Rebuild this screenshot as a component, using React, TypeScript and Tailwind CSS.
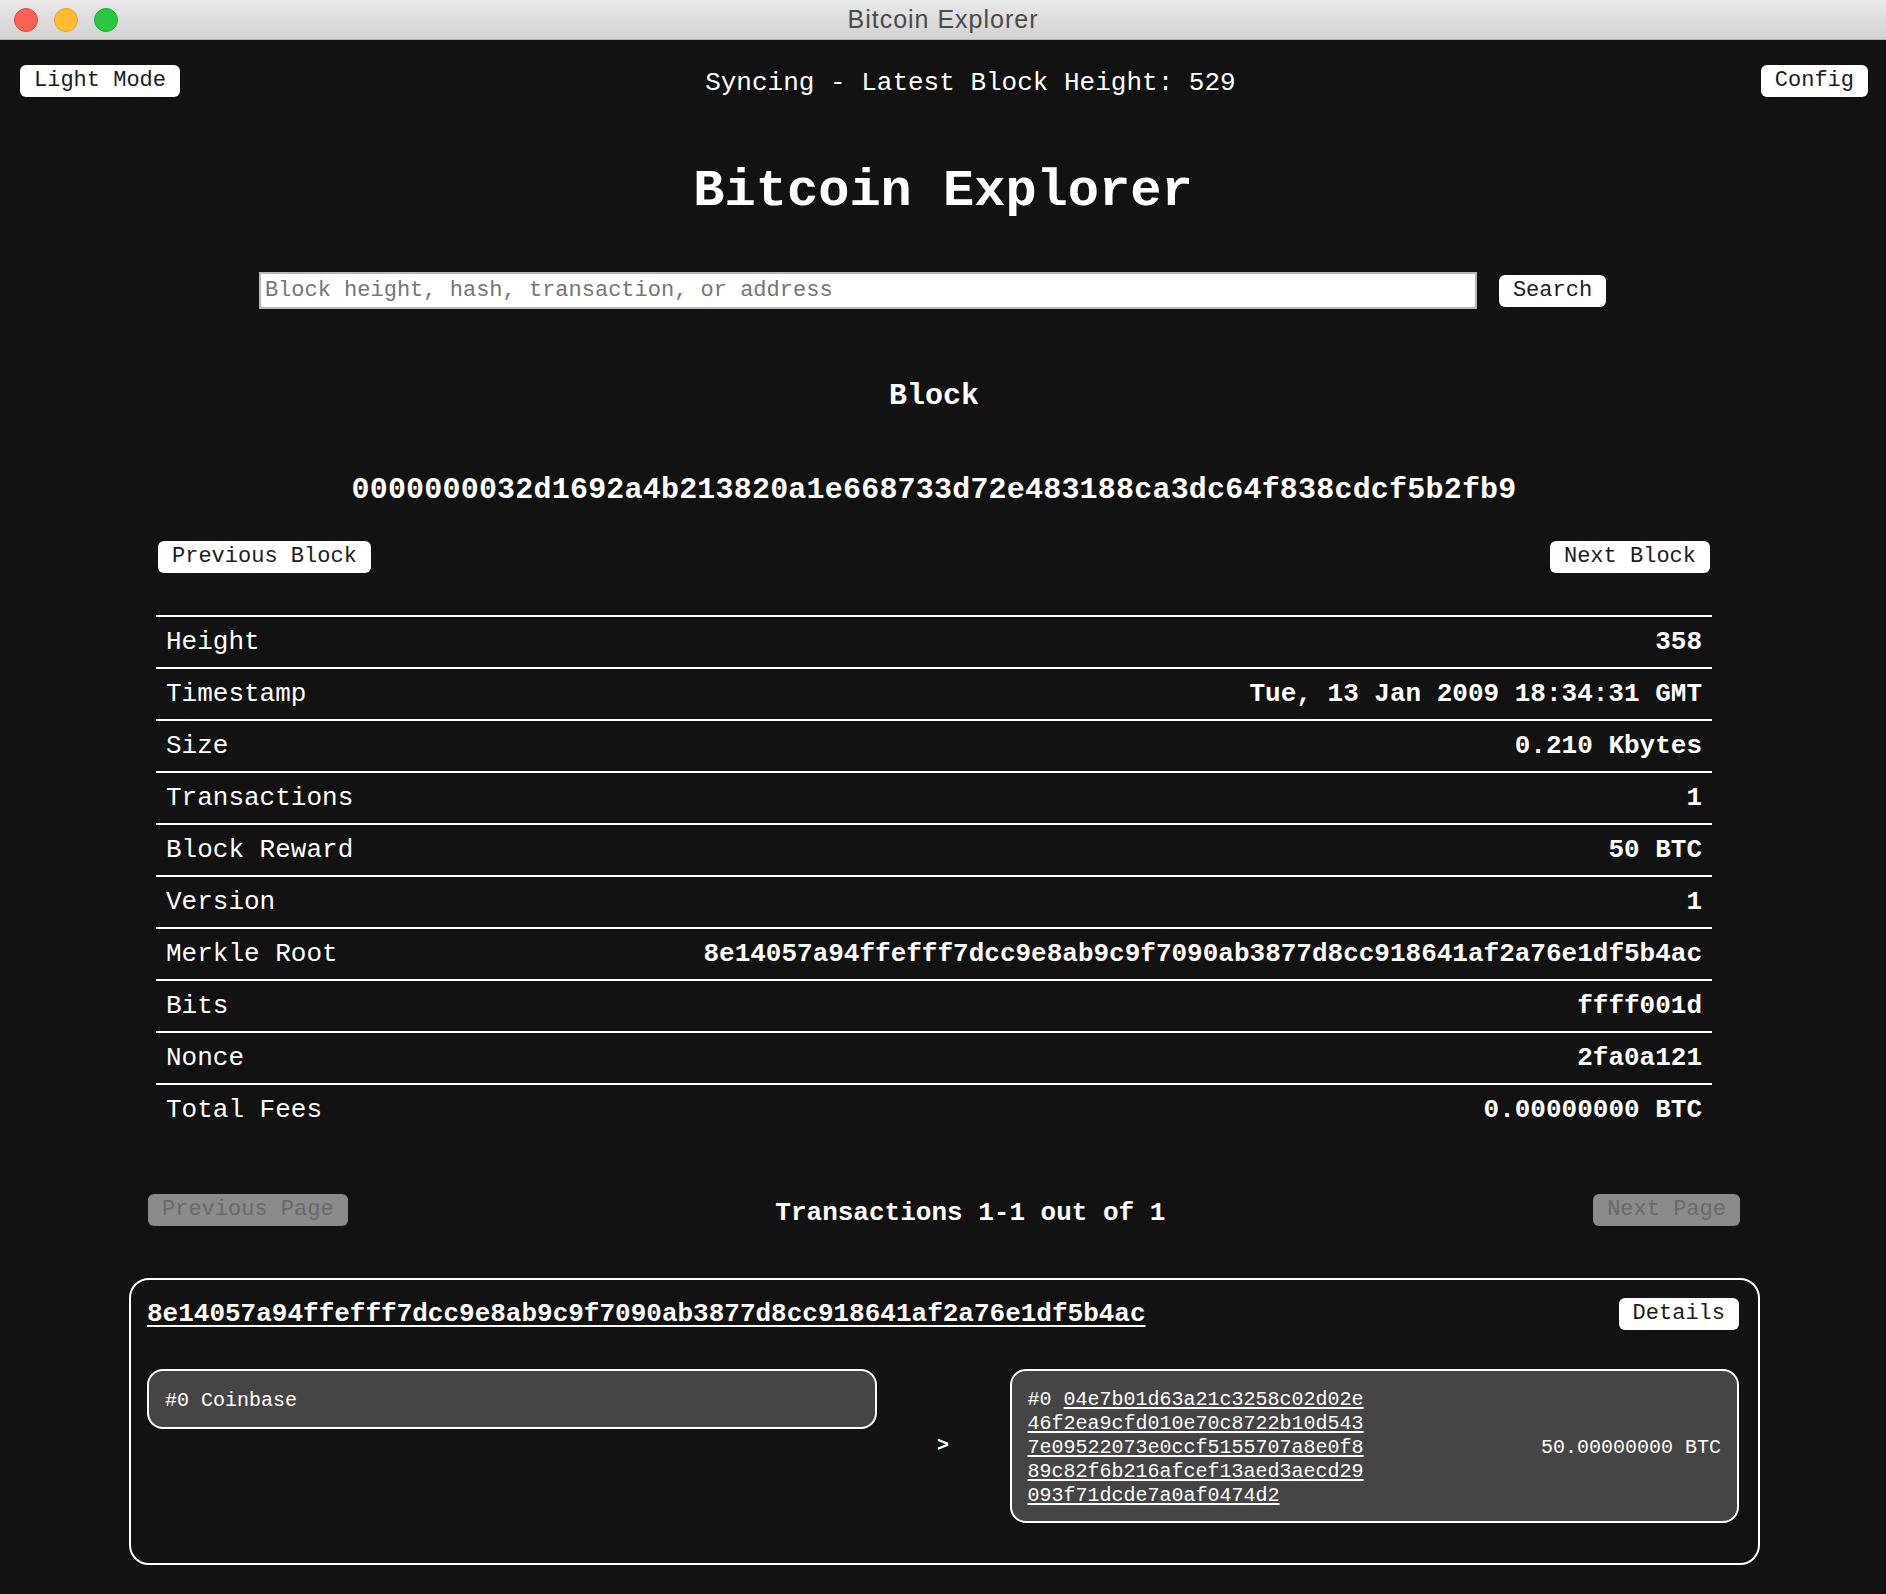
import React from "react";

const rows: [string, string][] = [
  ["Height", "358"],
  ["Timestamp", "Tue, 13 Jan 2009 18:34:31 GMT"],
  ["Size", "0.210 Kbytes"],
  ["Transactions", "1"],
  ["Block Reward", "50 BTC"],
  ["Version", "1"],
  ["Merkle Root", "8e14057a94ffefff7dcc9e8ab9c9f7090ab3877d8cc918641af2a76e1df5b4ac"],
  ["Bits", "ffff001d"],
  ["Nonce", "2fa0a121"],
  ["Total Fees", "0.00000000 BTC"],
];

function Btn({ children, disabled }: { children: React.ReactNode; disabled?: boolean }) {
  return (
    <button
      disabled={disabled}
      className={
        disabled
          ? "h-8 px-[14px] rounded-[6px] bg-[#8b8b8b] text-[#6a6a6a] text-[22px] leading-none"
          : "h-8 px-[14px] rounded-[6px] bg-white text-[#1c1c1c] text-[22px] leading-none"
      }
    >
      {children}
    </button>
  );
}

export default function App() {
  return (
    <div className="min-h-screen bg-[#121212] text-white font-['Liberation_Mono','Courier_New',monospace] pb-[29px]">
      {/* window title bar */}
      <div className="h-10 flex items-center bg-gradient-to-b from-[#e9e9e9] to-[#d2d2d2] border-b border-[#b4b4b4]">
        <div className="w-[118px] flex gap-4 pl-[14px]">
          <span className="w-6 h-6 rounded-full bg-[#fe5f57] border border-[#e2463f]" />
          <span className="w-6 h-6 rounded-full bg-[#febc2e] border border-[#e1a325]" />
          <span className="w-6 h-6 rounded-full bg-[#28c840] border border-[#1eaa34]" />
        </div>
        <div className="flex-1 text-center text-[25px] tracking-[1px] text-[#4a4a4a] font-['Liberation_Sans',sans-serif]">
          Bitcoin Explorer
        </div>
        <div className="w-[118px]" />
      </div>

      {/* top bar */}
      <div className="flex items-center justify-between pl-5 pr-[18px] pt-[25px]">
        <Btn>Light Mode</Btn>
        <span className="text-[26px] leading-none pt-1">Syncing - Latest Block Height: 529</span>
        <Btn>Config</Btn>
      </div>

      <h1 className="mt-[65px] text-center text-[52px] font-bold leading-[59px]">Bitcoin Explorer</h1>

      <div className="mt-[51px] flex justify-center items-center gap-[22px] pr-[21px]">
        <input
          className="w-[1218px] h-[37px] border-2 border-[#b8b8b8] bg-white px-1 text-[22px] text-black placeholder:text-[#757575] outline-none"
          placeholder="Block height, hash, transaction, or address"
        />
        <Btn>Search</Btn>
      </div>

      {/* block section */}
      <div className="ml-[156px] w-[1556px] mt-[70px]">
        <h2 className="text-center text-[30px] font-bold leading-[34px]">Block</h2>
        <div className="mt-[60px] text-center text-[30px] tracking-[0.2px] font-bold leading-[34px]">
          0000000032d1692a4b213820a1e668733d72e483188ca3dc64f838cdcf5b2fb9
        </div>
        <div className="mt-[34px] flex justify-between px-[2px]">
          <Btn>Previous Block</Btn>
          <Btn>Next Block</Btn>
        </div>
        <div className="mt-[42px]">
          {rows.map(([label, value]) => (
            <div
              key={label}
              className="h-[52px] border-t-2 border-white flex items-center justify-between px-[10px] text-[26px] leading-8"
            >
              <span>{label}</span>
              <span className="font-bold">{value}</span>
            </div>
          ))}
        </div>
      </div>

      {/* pagination */}
      <div className="ml-[148px] w-[1592px] mt-[59px] flex justify-between items-center">
        <Btn disabled>Previous Page</Btn>
        <span className="text-[26px] font-bold leading-8 translate-y-[3px]">Transactions 1-1 out of 1</span>
        <Btn disabled>Next Page</Btn>
      </div>

      {/* transaction card */}
      <div className="ml-[129px] w-[1631px] mt-[52px] border-2 border-white rounded-[20px] pt-[18px] pl-4 pr-[19px] pb-10">
        <div className="flex justify-between items-center">
          <a className="text-[26px] font-bold leading-8 underline underline-offset-4">
            8e14057a94ffefff7dcc9e8ab9c9f7090ab3877d8cc918641af2a76e1df5b4ac
          </a>
          <Btn>Details</Btn>
        </div>
        <div className="mt-[39px] grid grid-cols-[1fr_133px_1fr] items-center text-[20px] leading-6">
          <div className="self-start border-2 border-white rounded-[16px] bg-[#454545] px-4 pt-[18px] pb-[14px]">
            #0 Coinbase
          </div>
          <div className="text-center font-bold">&gt;</div>
          <div className="border-2 border-white rounded-[16px] bg-[#454545] px-4 pt-[17px] pb-[13px] flex justify-between items-center">
            <div className="w-[340px] break-all">
              #0{" "}
              <a className="underline underline-offset-2">
                04e7b01d63a21c3258c02d02e46f2ea9cfd010e70c8722b10d5437e09522073e0ccf5155707a8e0f889c82f6b216afcef13aed3aecd29093f71dcde7a0af0474d2
              </a>
            </div>
            <span>50.00000000 BTC</span>
          </div>
        </div>
      </div>
    </div>
  );
}
